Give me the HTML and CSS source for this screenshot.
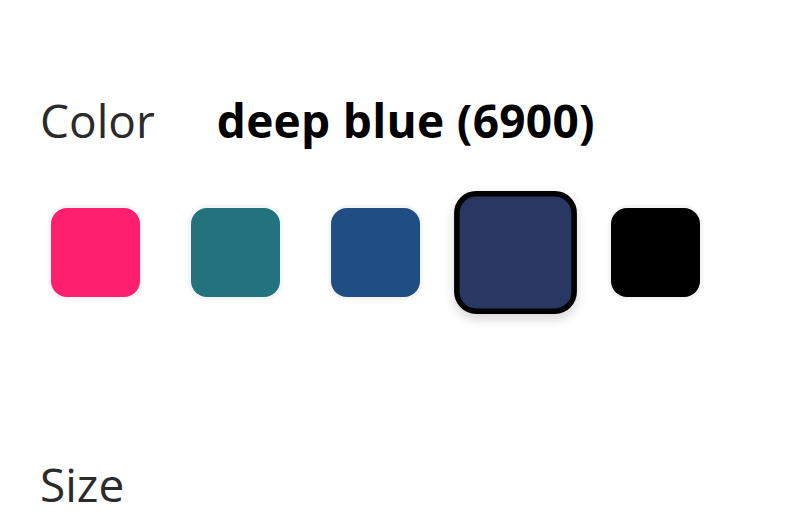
FILE: index.html
```html
<!DOCTYPE html>
<html lang="en">
  <head>
    <meta charset="UTF-8" />
    <meta name="viewport" content="width=device-width, initial-scale=1.0" />
    <title>Product Options</title>
    <link rel="stylesheet" href="styles.css">
  </head>
  <body>
    <div class="options">
      <!-- Color section -->
      <div class="option-head">
        <span class="option-label">Color</span>
        <span class="option-value" id="colorName">deep blue (6900)</span>
      </div>
      <div class="swatches">
        <button class="swatch" style="background-color: #ff1f6e" title="pink"></button>
        <button class="swatch" style="background-color: #22737e" title="teal"></button>
        <button class="swatch" style="background-color: #1f4d84" title="blue"></button>
        <button class="swatch active" style="background-color: #283863" title="deep blue (6900)"></button>
        <button class="swatch" style="background-color: #000000" title="black"></button>
      </div>

      <!-- Size section -->
      <div class="option-head size-head">
        <span class="option-label">Size</span>
      </div>
    </div>
  </body>
</html>
```

FILE: styles.css
```css
body {
  margin: 0;
  font-family: "Open Sans", Arial, sans-serif;
  background: #fff;
}

.options {
  padding: 89px 40px 0;
}

.option-head {
  display: flex;
  align-items: baseline;
  gap: 62px;
  font-size: 46px;
  line-height: 63px;
}
.option-label {
  color: #2b2b2b;
}
.option-value {
  font-weight: bold;
  color: #000;
  letter-spacing: 0.3px;
}

/* Swatches */
.swatches {
  display: flex;
  gap: 51px;
  margin-top: 56px;
  padding-left: 11px;
}
.swatch {
  width: 89px;
  height: 89px;
  padding: 0;
  border: none;
  border-radius: 16px;
  box-sizing: border-box;
  box-shadow: 0 0 2px 3px #f3f4f4;
  cursor: pointer;
}
.swatch.active {
  border: 4.5px solid #000;
  transform: scale(1.38);
  box-shadow: 0 3px 8px rgba(0, 0, 0, 0.16);
}

.size-head {
  margin-top: 156px;
}
```
